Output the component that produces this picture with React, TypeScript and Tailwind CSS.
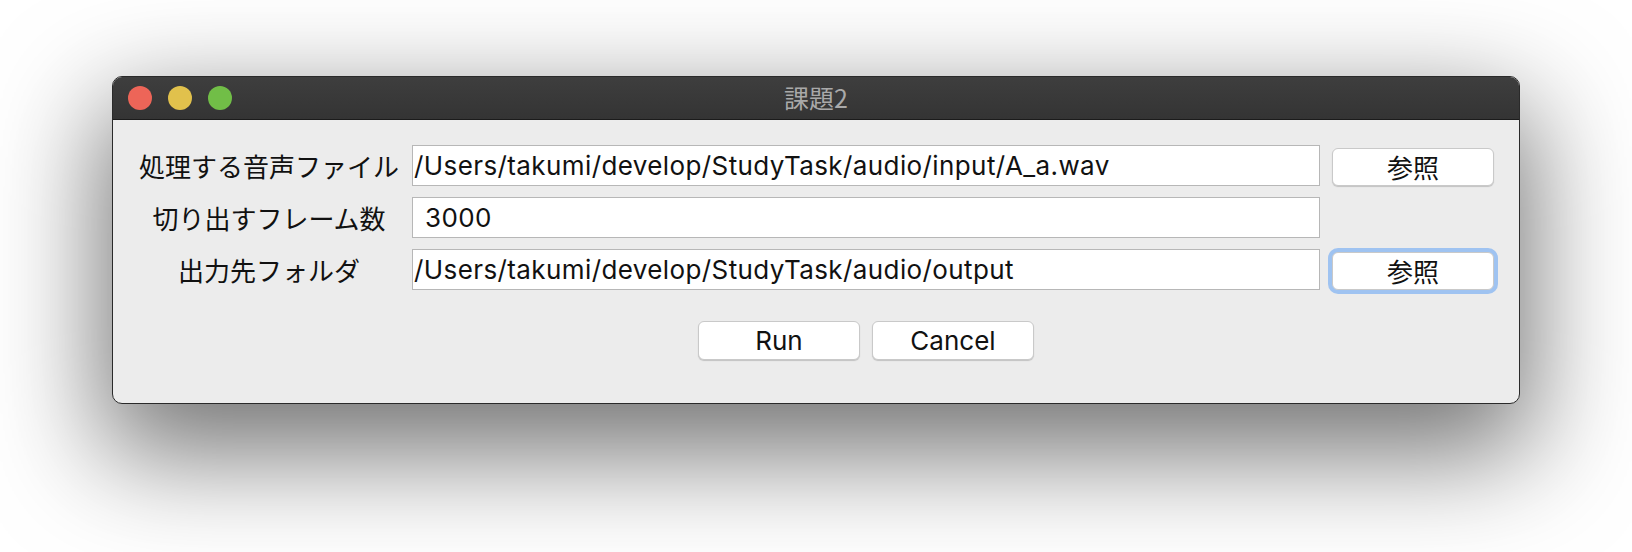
import React from 'react';

const latin = "font-['Inter','Noto_Sans_CJK_JP',sans-serif]";
const cjk = "font-['Noto_Sans_CJK_JP',sans-serif]";

function PushButton({ label, focused = false }: { label: string; focused?: boolean }) {
  return (
    <button
      className={`h-[38px] w-[162px] rounded-[6px] bg-white border border-[#c9c9c9] text-[26px] leading-none text-[#111] ${cjk} ${
        focused
          ? 'shadow-[0_0_0_4px_#9fc3f1]'
          : 'shadow-[0_1px_1px_rgba(0,0,0,0.18)]'
      }`}
    >
      {label}
    </button>
  );
}

function Field({ value, inset = false }: { value: string; inset?: boolean }) {
  return (
    <div
      className={`h-[41px] w-[908px] bg-white border border-[#b7b7b7] flex items-center text-[26px] tracking-[0.4px] text-[#111] ${latin} ${
        inset ? 'pl-[12px]' : 'pl-[1px]'
      }`}
    >
      {value}
    </div>
  );
}

export default function App() {
  const rows = [
    { label: '処理する音声ファイル', value: '/Users/takumi/develop/StudyTask/audio/input/A_a.wav', button: true },
    { label: '切り出すフレーム数', value: '3000', inset: true },
    { label: '出力先フォルダ', value: '/Users/takumi/develop/StudyTask/audio/output', button: true, focused: true },
  ];

  return (
    <main className="w-[1632px] h-[552px] bg-white pt-[76px] pl-[112px] overflow-hidden">
      <div className="w-[1408px] h-[328px] rounded-[10px] border border-[#2a2a2a] bg-[#ececec] overflow-hidden shadow-[0_40px_110px_10px_rgba(0,0,0,0.55)] flex flex-col">
        {/* title bar */}
        <div className="relative h-[43px] shrink-0 bg-gradient-to-b from-[#3e3e3e] to-[#343434] border-b border-[#1b1b1b] flex items-center">
          <div className="flex gap-[16px] pl-[15px]">
            <span className="w-[24px] h-[24px] rounded-full bg-[#ed6558]" />
            <span className="w-[24px] h-[24px] rounded-full bg-[#e1c14c]" />
            <span className="w-[24px] h-[24px] rounded-full bg-[#71be47]" />
          </div>
          <div className={`absolute inset-0 flex items-center justify-center text-[25px] text-[#a9a9a9] ${cjk}`}>
            課題2
          </div>
        </div>

        {/* form */}
        <div className="pt-[25px] pl-[20px] flex flex-col gap-[11px]">
          {rows.map((r) => (
            <div key={r.label} className="flex items-center h-[41px]">
              <div className={`w-[272px] text-center text-[26px] leading-none text-[#111] ${cjk}`}>{r.label}</div>
              <div className="ml-[7px]">
                <Field value={r.value} inset={r.inset} />
              </div>
              {r.button && (
                <div className="ml-[12px] mt-[3px]">
                  <PushButton label="参照" focused={r.focused} />
                </div>
              )}
            </div>
          ))}
        </div>

        <div className="flex gap-[12px] pl-[585px] pt-[31px]">
          <button className={`h-[39px] w-[162px] rounded-[6px] bg-white border border-[#c9c9c9] shadow-[0_1px_1px_rgba(0,0,0,0.18)] text-[26px] leading-none text-[#111] ${latin}`}>
            Run
          </button>
          <button className={`h-[39px] w-[162px] rounded-[6px] bg-white border border-[#c9c9c9] shadow-[0_1px_1px_rgba(0,0,0,0.18)] text-[26px] leading-none text-[#111] ${latin}`}>
            Cancel
          </button>
        </div>
      </div>
    </main>
  );
}
